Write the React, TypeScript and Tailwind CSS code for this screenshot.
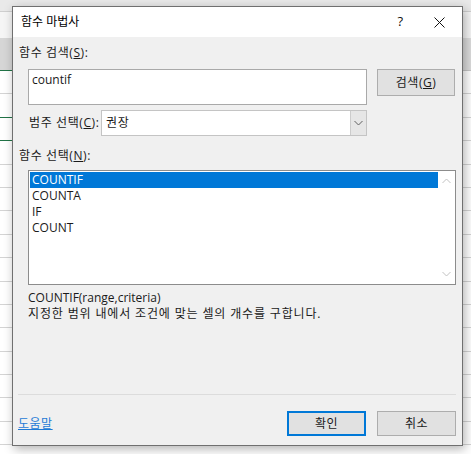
import React from "react";

const font = { fontFamily: '"Open Sans", "Noto Sans CJK KR", sans-serif' };

const items = ["COUNTIF", "COUNTA", "IF", "COUNT"];

function Cells({ green }: { green?: boolean }) {
  return (
    <div className="flex h-[23.4px] shrink-0">
      <div
        className={`w-[25px] shrink-0 border-r border-b border-r-[#d4d4d4] ${
          green ? "border-b-[#217346]" : "border-b-[#d4d4d4]"
        }`}
      />
      {Array.from({ length: 7 }).map((_, i) => (
        <div key={i} className="w-[70.4px] shrink-0 border-r border-b border-[#d4d4d4]" />
      ))}
    </div>
  );
}

function Chevron({ up, className }: { up?: boolean; className?: string }) {
  return (
    <svg width="9" height="6" viewBox="0 0 9 6" className={className}>
      <path
        d={up ? "M0.5 5L4.5 1L8.5 5" : "M0.5 1L4.5 5L8.5 1"}
        fill="none"
        stroke="currentColor"
        strokeWidth="1"
      />
    </svg>
  );
}

export default function App() {
  return (
    <div className="relative w-[471px] h-[454px] overflow-hidden bg-white text-[12px]" style={font}>
      {/* spreadsheet behind */}
      <div className="flex flex-col">
        <div className="h-[12px] bg-[#e9e9e9] border-b border-[#cfcfcf]" />
        <div className="h-[26px] bg-[#f5f5f5]" />
        <div className="flex h-[33px]">
          <div className="w-[25px] bg-[#d6d6d6] border-b border-[#217346]" />
          <div className="flex-1 bg-[#dcdcdc] border-b border-[#c6c6c6]" />
        </div>
        <Cells />
        <Cells green />
        <Cells green />
        {Array.from({ length: 13 }).map((_, i) => (
          <Cells key={i} />
        ))}
      </div>

      {/* dialog */}
      <div className="absolute left-[12px] top-[6px] w-[451px] h-[440px] flex flex-col border border-[#707070] bg-[#f0f0f0] shadow-[2px_3px_10px_rgba(0,0,0,0.3)]">
        <div className="h-[30px] shrink-0 bg-white flex items-center">
          <span className="pl-[8px] text-[#000] leading-none">함수 마법사</span>
          <span className="ml-auto mr-[31px] text-[13px] text-[#111]">?</span>
          <svg width="11" height="11" viewBox="0 0 11 11" className="mr-[17px] text-[#111]">
            <path d="M0.5 0.5L10.5 10.5M10.5 0.5L0.5 10.5" stroke="currentColor" strokeWidth="1" />
          </svg>
        </div>

        <div className="flex flex-col flex-1 text-[#1a1a1a]">
          <div className="mt-[8px] ml-[6px] leading-[16px] tracking-[0.6px]">
            함수 검색(<span className="underline">S</span>):
          </div>

          <div className="flex mt-[8px]">
            <div className="ml-[15px] w-[339px] h-[36px] bg-white border border-[#a9a9a9] px-[3px] pt-[2px] leading-[16px]">
              countif
            </div>
            <button className="ml-[10px] w-[78px] h-[27px] bg-[#e1e1e1] border border-[#adadad] leading-none tracking-[0.5px]">
              검색(<span className="underline">G</span>)
            </button>
          </div>

          <div className="flex items-center mt-[5px] h-[26px]">
            <span className="w-[88px] pl-[16px] whitespace-nowrap tracking-[0.6px]">
              범주 선택(<span className="underline">C</span>):
            </span>
            <div className="w-[266px] h-[26px] flex bg-white border border-[#c4c4c4]">
              <span className="flex-1 pl-[4px] leading-[24px] tracking-[0.6px]">권장</span>
              <div className="w-[16px] bg-[#e6e6e6] border-l border-[#cccccc] flex items-center justify-center text-[#606060]">
                <Chevron />
              </div>
            </div>
          </div>

          <div className="mt-[12px] ml-[6px] leading-[16px] tracking-[0.6px]">
            함수 선택(<span className="underline">N</span>):
          </div>

          <div className="ml-[15px] mt-[6px] w-[428px] h-[115px] bg-white border border-[#8c8c8c] flex">
            <div className="flex-1 pl-[1px] pt-[1px] flex flex-col">
              {items.map((it, i) => (
                <div
                  key={it}
                  className={`h-[16px] leading-[16px] pl-[2px] ${
                    i === 0 ? "bg-[#0078d7] text-white" : "text-[#1a1a1a]"
                  }`}
                >
                  {it}
                </div>
              ))}
            </div>
            <div className="w-[17px] flex flex-col items-center justify-between py-[7px] text-[#c2c2c2]">
              <Chevron up />
              <Chevron />
            </div>
          </div>

          <div className="ml-[15px] mt-[5px] leading-[16px]">
            <div>COUNTIF(range,criteria)</div>
            <div className="tracking-[0.85px]">지정한 범위 내에서 조건에 맞는 셀의 개수를 구합니다.</div>
          </div>

          <div className="ml-[5px] mt-[72px] w-[438px] h-px bg-[#dcdcdc]" />

          <div className="flex items-center mt-[16px]">
            <a className="ml-[5px] text-[#1f7ad6] underline tracking-[0.5px]">도움말</a>
            <button className="ml-auto w-[79px] h-[25px] bg-[#e1e1e1] border-2 border-[#0078d7] leading-none tracking-[0.5px]">
              확인
            </button>
            <button className="ml-[11px] mr-[6px] w-[79px] h-[25px] bg-[#e1e1e1] border border-[#adadad] leading-none tracking-[0.5px]">
              취소
            </button>
          </div>
        </div>
      </div>
    </div>
  );
}
